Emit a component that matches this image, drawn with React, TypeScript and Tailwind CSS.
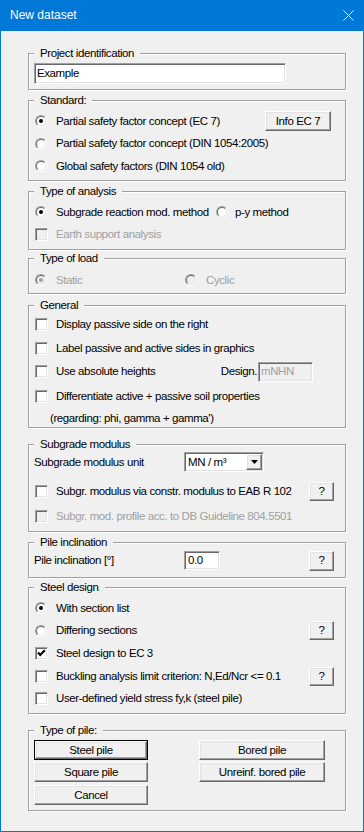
import React from 'react';

const raised =
  'flex items-center justify-center bg-[#f0f0f0] border border-t-white border-l-white border-r-[#696969] border-b-[#696969] shadow-[inset_-1px_-1px_0_#a0a0a0,inset_1px_1px_0_#e3e3e3]';
const sunken =
  'border border-t-[#a0a0a0] border-l-[#a0a0a0] border-r-white border-b-white shadow-[inset_1px_1px_0_#696969,inset_-1px_-1px_0_#e3e3e3]';

const GroupBox = ({ title, className, children }: { title: string; className: string; children?: React.ReactNode }) => (
  <div className={`relative w-[318px] shrink-0 border border-[#a0a0a0] shadow-[inset_1px_1px_0_#fff,1px_1px_0_#fff] ${className}`}>
    <span className="absolute -top-[7px] left-[5px] bg-[#f0f0f0] px-[6px] leading-[13px]">{title}</span>
    {children}
  </div>
);

const Radio = ({ checked, disabled }: { checked?: boolean; disabled?: boolean }) => (
  <div className="w-[12px] h-[12px] shrink-0 rounded-full border border-t-[#a0a0a0] border-l-[#a0a0a0] border-r-white border-b-white">
    <div
      className={`w-full h-full rounded-full border border-t-[#696969] border-l-[#696969] border-r-[#e3e3e3] border-b-[#e3e3e3] flex items-center justify-center ${
        disabled ? 'bg-[#f0f0f0]' : 'bg-white'
      }`}
    >
      {checked && <div className={`w-[4px] h-[4px] rounded-full ${disabled ? 'bg-[#a0a0a0]' : 'bg-black'}`} />}
    </div>
  </div>
);

const Checkbox = ({ checked, disabled }: { checked?: boolean; disabled?: boolean }) => (
  <div className={`w-[13px] h-[13px] shrink-0 ${sunken} ${disabled ? 'bg-[#f0f0f0]' : 'bg-white'}`}>
    {checked && (
      <svg width="11" height="11" viewBox="0 0 11 11">
        <path d="M2 4.5 L4.2 6.9 L8.8 2.2" stroke="#000" strokeWidth="2.2" fill="none" />
      </svg>
    )}
  </div>
);

const Label = ({ children, disabled, className = '' }: { children: React.ReactNode; disabled?: boolean; className?: string }) => (
  <span className={`whitespace-nowrap ${disabled ? 'text-[#a0a0a0]' : 'text-black'} ${className}`}>{children}</span>
);

const Help = ({ className = '' }: { className?: string }) => (
  <div className={`${raised} ml-auto mr-[11px] w-[25px] h-[19px] ${className}`}>?</div>
);

const Button = ({ children, width, isDefault }: { children: React.ReactNode; width: string; isDefault?: boolean }) =>
  isDefault ? (
    <div className={`${width} h-[20px] border border-black`}>
      <div className={`${raised} w-full h-full`}>{children}</div>
    </div>
  ) : (
    <div className={`${raised} ${width} h-[20px]`}>{children}</div>
  );

export default function App() {
  return (
    <div className="w-[364px] h-[832px] bg-[#0078d7] flex flex-col font-['Liberation_Sans',Arial,sans-serif] text-[11.5px] tracking-[-0.4px] leading-[13px] text-black">
      <div className="h-[31px] shrink-0 flex items-center pl-[10px] pr-[10px] text-white">
        <span className="text-[12px] tracking-normal">New dataset</span>
        <svg className="ml-auto" width="11" height="11" viewBox="0 0 11 11">
          <path d="M0.5 0.5 L10.5 10.5 M10.5 0.5 L0.5 10.5" stroke="#fff" strokeWidth="1" />
        </svg>
      </div>

      <div className="flex-1 mx-[1px] mb-[1px] bg-[#f0f0f0] flex flex-col pl-[27px]">
        <GroupBox title="Project identification" className="mt-[22px] h-[37px] pt-[9px] pl-[5px]">
          <div className={`${sunken} bg-white w-[252px] h-[21px] flex items-center pl-[2px]`}>Example</div>
        </GroupBox>

        <GroupBox title="Standard:" className="mt-[10px] h-[81px] pt-[9px] pl-[6px]">
          <div className="flex items-center h-[22px]">
            <Radio checked />
            <Label className="ml-[9px]">Partial safety factor concept (EC 7)</Label>
            <div className={`${raised} ml-auto mr-[14px] w-[66px] h-[20px]`}>Info EC 7</div>
          </div>
          <div className="flex items-center h-[23px]">
            <Radio />
            <Label className="ml-[9px]">Partial safety factor concept (DIN 1054:2005)</Label>
          </div>
          <div className="flex items-center h-[22px]">
            <Radio />
            <Label className="ml-[9px]">Global safety factors (DIN 1054 old)</Label>
          </div>
        </GroupBox>

        <GroupBox title="Type of analysis" className="mt-[10px] h-[59px] pt-[9px] pl-[6px]">
          <div className="flex items-center h-[22px]">
            <Radio checked />
            <Label className="ml-[9px] w-[160px]">Subgrade reaction mod. method</Label>
            <Radio />
            <Label className="ml-[7px]">p-y method</Label>
          </div>
          <div className="flex items-center h-[23px]">
            <Checkbox disabled />
            <Label className="ml-[8px]" disabled>
              Earth support analysis
            </Label>
          </div>
        </GroupBox>

        <GroupBox title="Type of load" className="mt-[8px] h-[36px] pt-[10px] pl-[6px]">
          <div className="flex items-center h-[22px]">
            <Radio checked disabled />
            <Label className="ml-[9px] w-[129px]" disabled>
              Static
            </Label>
            <Radio disabled />
            <Label className="ml-[9px]" disabled>
              Cyclic
            </Label>
          </div>
        </GroupBox>

        <GroupBox title="General" className="mt-[11px] h-[123px] pt-[7px] pl-[6px]">
          <div className="flex items-center h-[23px]">
            <Checkbox />
            <Label className="ml-[8px]">Display passive side on the right</Label>
          </div>
          <div className="flex items-center h-[24px]">
            <Checkbox />
            <Label className="ml-[8px]">Label passive and active sides in graphics</Label>
          </div>
          <div className="flex items-center h-[23px]">
            <Checkbox />
            <Label className="ml-[8px]">Use absolute heights</Label>
            <Label className="ml-auto mr-[1px]">Design.</Label>
            <div className={`${sunken} bg-[#f0f0f0] w-[55px] h-[20px] mr-[32px] flex items-center pl-[2px] text-[#a0a0a0]`}>
              mNHN
            </div>
          </div>
          <div className="flex items-center h-[26px]">
            <Checkbox />
            <Label className="ml-[8px]">Differentiate active + passive soil properties</Label>
          </div>
          <div className="flex items-center h-[18px]">
            <Label className="ml-[15px]">(regarding: phi, gamma + gamma')</Label>
          </div>
        </GroupBox>

        <GroupBox title="Subgrade modulus" className="mt-[16px] h-[88px] pt-[7px] pl-[5px]">
          <div className="flex items-center h-[20px]">
            <Label className="w-[150px]">Subgrade modulus unit</Label>
            <div className={`${sunken} bg-white w-[80px] h-[20px] flex items-center pl-[3px] pr-[1px]`}>
              <span>MN / m³</span>
              <div className={`${raised} ml-auto w-[16px] h-[16px]`}>
                <svg width="7" height="4" viewBox="0 0 7 4">
                  <path d="M0 0 H7 L3.5 4 Z" fill="#000" />
                </svg>
              </div>
            </div>
          </div>
          <div className="flex items-center h-[20px] mt-[9px]">
            <div className="ml-[1px]">
              <Checkbox />
            </div>
            <Label className="ml-[8px]">Subgr. modulus via constr. modulus to EAB R 102</Label>
            <Help />
          </div>
          <div className="flex items-center h-[20px] mt-[5px]">
            <div className="ml-[1px]">
              <Checkbox disabled />
            </div>
            <Label className="ml-[8px]" disabled>
              Subgr. mod. profile acc. to DB Guideline 804.5501
            </Label>
          </div>
        </GroupBox>

        <GroupBox title="Pile inclination" className="mt-[10px] h-[36px] pt-[7px] pl-[5px]">
          <div className="flex items-center h-[21px]">
            <Label className="w-[150px]">Pile inclination [°]</Label>
            <div className={`${sunken} bg-white w-[36px] h-[19px] flex items-center pl-[3px]`}>0.0</div>
            <Help className="h-[20px]" />
          </div>
        </GroupBox>

        <GroupBox title="Steel design" className="mt-[9px] h-[127px] pt-[9px] pl-[6px]">
          <div className="flex items-center h-[22px]">
            <Radio checked />
            <Label className="ml-[9px]">With section list</Label>
          </div>
          <div className="flex items-center h-[23px]">
            <Radio />
            <Label className="ml-[9px]">Differing sections</Label>
            <Help />
          </div>
          <div className="flex items-center h-[23px]">
            <Checkbox checked />
            <Label className="ml-[8px]">Steel design to EC 3</Label>
          </div>
          <div className="flex items-center h-[22px]">
            <Checkbox />
            <Label className="ml-[8px]">Buckling analysis limit criterion: N,Ed/Ncr &lt;= 0.1</Label>
            <Help />
          </div>
          <div className="flex items-center h-[23px]">
            <Checkbox />
            <Label className="ml-[8px]">User-defined yield stress fy,k (steel pile)</Label>
          </div>
        </GroupBox>

        <GroupBox title="Type of pile:" className="mt-[16px] h-[81px] pt-[9px] pl-[5px]">
          <div className="flex gap-[51px]">
            <Button width="w-[114px]" isDefault>
              Steel pile
            </Button>
            <Button width="w-[126px]">Bored pile</Button>
          </div>
          <div className="flex gap-[51px] mt-[2px]">
            <Button width="w-[114px]">Square pile</Button>
            <Button width="w-[126px]">Unreinf. bored pile</Button>
          </div>
          <div className="flex mt-[3px]">
            <Button width="w-[114px]">Cancel</Button>
          </div>
        </GroupBox>
      </div>
    </div>
  );
}
